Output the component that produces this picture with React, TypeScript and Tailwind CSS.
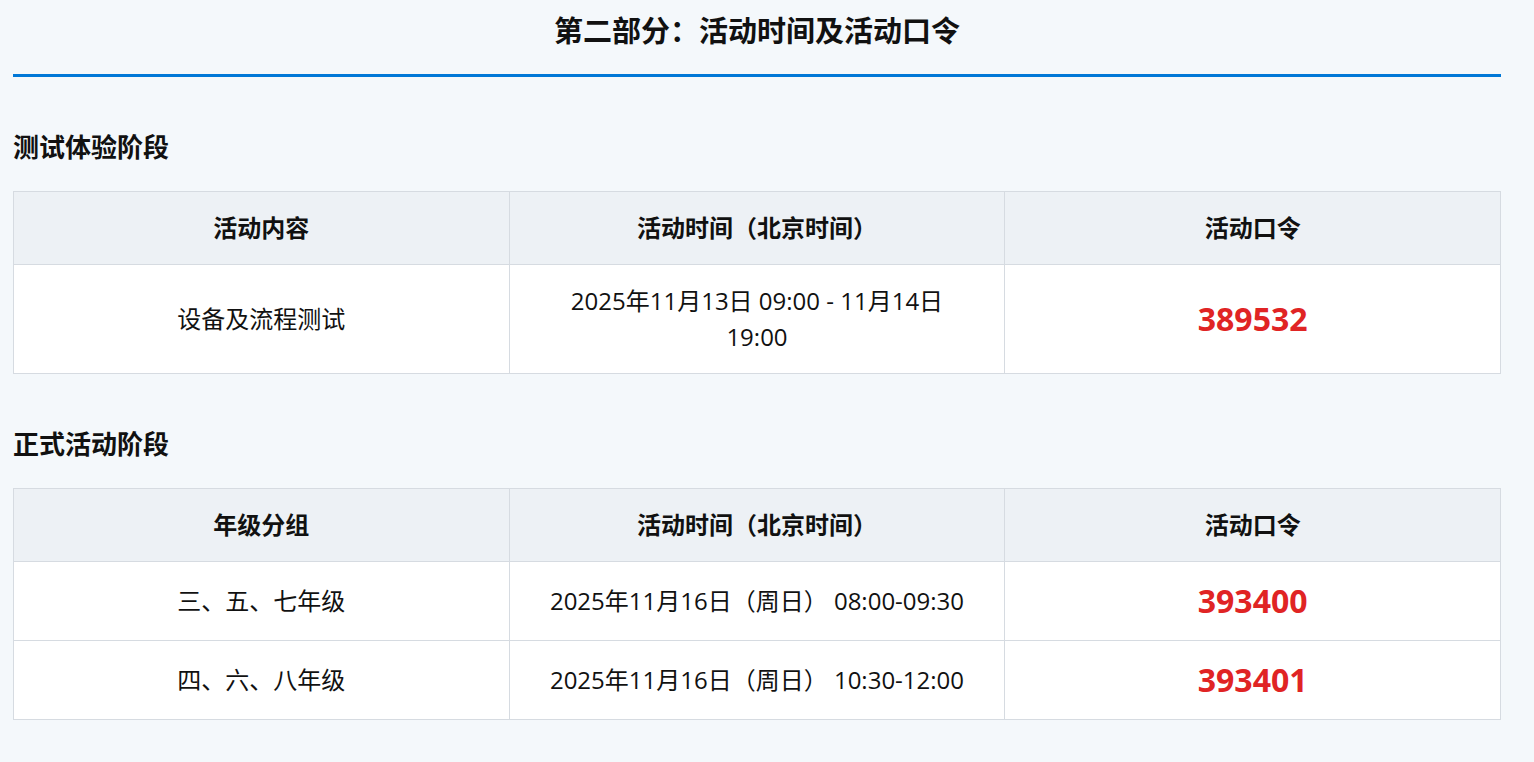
const FONT = '"Open Sans", "Noto Sans CJK SC", sans-serif'

type Row = { first: string; time: string; code: string }

const trialRows: Row[] = [
  { first: '设备及流程测试', time: '2025年11月13日 09:00 - 11月14日 19:00', code: '389532' },
]

const formalRows: Row[] = [
  { first: '三、五、七年级', time: '2025年11月16日（周日） 08:00-09:30', code: '393400' },
  { first: '四、六、八年级', time: '2025年11月16日（周日） 10:30-12:00', code: '393401' },
]

function StageTable({ firstHeader, rows }: { firstHeader: string; rows: Row[] }) {
  const cell = 'border border-[#d6dbe1] px-8 py-[18px] text-center align-middle'
  return (
    <table className="w-full table-fixed border-collapse text-[24px] leading-[36px] text-[#111]">
      <thead>
        <tr className="bg-[#edf1f5]">
          <th className={`${cell} font-bold`}>{firstHeader}</th>
          <th className={`${cell} font-bold`}>活动时间（北京时间）</th>
          <th className={`${cell} font-bold`}>活动口令</th>
        </tr>
      </thead>
      <tbody>
        {rows.map((r) => (
          <tr key={r.code} className="bg-white">
            <td className={cell}>{r.first}</td>
            <td className={cell}>{r.time}</td>
            <td className={cell}>
              <span className="text-[32px] leading-[42px] font-bold text-[#e02424]">{r.code}</span>
            </td>
          </tr>
        ))}
      </tbody>
    </table>
  )
}

export default function App() {
  return (
    <div className="min-h-[762px] bg-[#f4f8fb]" style={{ fontFamily: FONT }}>
      <div className="ml-[13px] w-[1488px] pb-10">
        <h2 className="border-b-[3px] border-[#0078d7] pt-[13px] pb-[26px] text-center text-[29px] leading-[35px] font-bold text-[#111]">
          第二部分：活动时间及活动口令
        </h2>

        <h3 className="mt-[50px] mb-[24px] text-[26px] leading-[40px] font-bold text-[#111]">测试体验阶段</h3>
        <StageTable firstHeader="活动内容" rows={trialRows} />

        <h3 className="mt-[50px] mb-[24px] text-[26px] leading-[40px] font-bold text-[#111]">正式活动阶段</h3>
        <StageTable firstHeader="年级分组" rows={formalRows} />
      </div>
    </div>
  )
}
